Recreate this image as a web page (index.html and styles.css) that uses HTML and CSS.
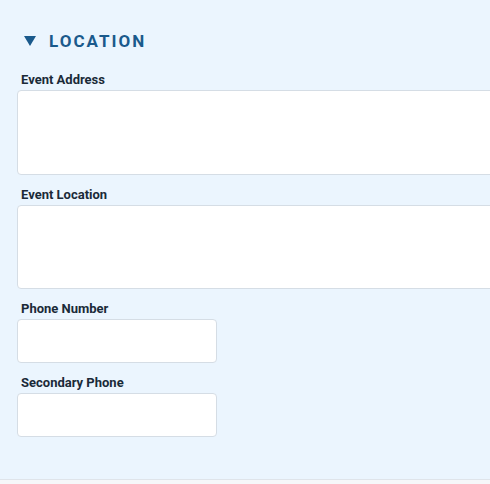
FILE: index.html
```html
<!DOCTYPE html>
<html>
<head>
<meta charset="utf-8">
<link rel="stylesheet" href="styles.css">
</head>
<body>
<section class="panel">
  <h2 class="section-title"><svg class="caret" width="12" height="10" viewBox="0 0 12 10"><path d="M0 0H12L6 10Z" fill="currentColor"/></svg>LOCATION</h2>
  <div class="field">
    <label class="field-label">Event Address</label>
    <textarea class="input textarea"></textarea>
  </div>
  <div class="field">
    <label class="field-label">Event Location</label>
    <textarea class="input textarea"></textarea>
  </div>
  <div class="field">
    <label class="field-label">Phone Number</label>
    <input class="input short" type="text">
  </div>
  <div class="field">
    <label class="field-label">Secondary Phone</label>
    <input class="input short" type="text">
  </div>
</section>
</body>
</html>
```
FILE: styles.css
```css
html, body {
  margin: 0;
  padding: 0;
  overflow: hidden;
  background: #f6f7f9;
  font-family: Roboto, "Liberation Sans", sans-serif;
}
.panel {
  width: 560px;
  height: 450px;
  box-sizing: content-box;
  padding: 29px 0 0 17px;
  background: #ebf5fe;
  border-bottom: 1px solid #dfe4ea;
}
.section-title {
  margin: 0 0 18px 0;
  display: flex;
  align-items: center;
  height: 24px;
  font-size: 17px;
  font-weight: 700;
  letter-spacing: 2px;
  color: #1a5a8c;
}
.caret {
  margin-left: 7px;
  margin-right: 13px;
  flex: none;
}
.field {
  display: flex;
  flex-direction: column;
  margin-bottom: 11px;
}
.field-label {
  display: block;
  font-size: 13px;
  line-height: 16px;
  font-weight: 700;
  color: #1a2a38;
  padding-top: 1px;
  margin: 0 0 2px 4px;
}
.input {
  box-sizing: border-box;
  border: 1px solid #d5dde5;
  border-radius: 4px;
  background: #fff;
  margin: 0;
  padding: 6px 8px;
  font: inherit;
  outline: none;
}
.textarea {
  width: 540px;
  height: 84.5px;
  resize: none;
}
.short {
  width: 200px;
  height: 44px;
}
```
